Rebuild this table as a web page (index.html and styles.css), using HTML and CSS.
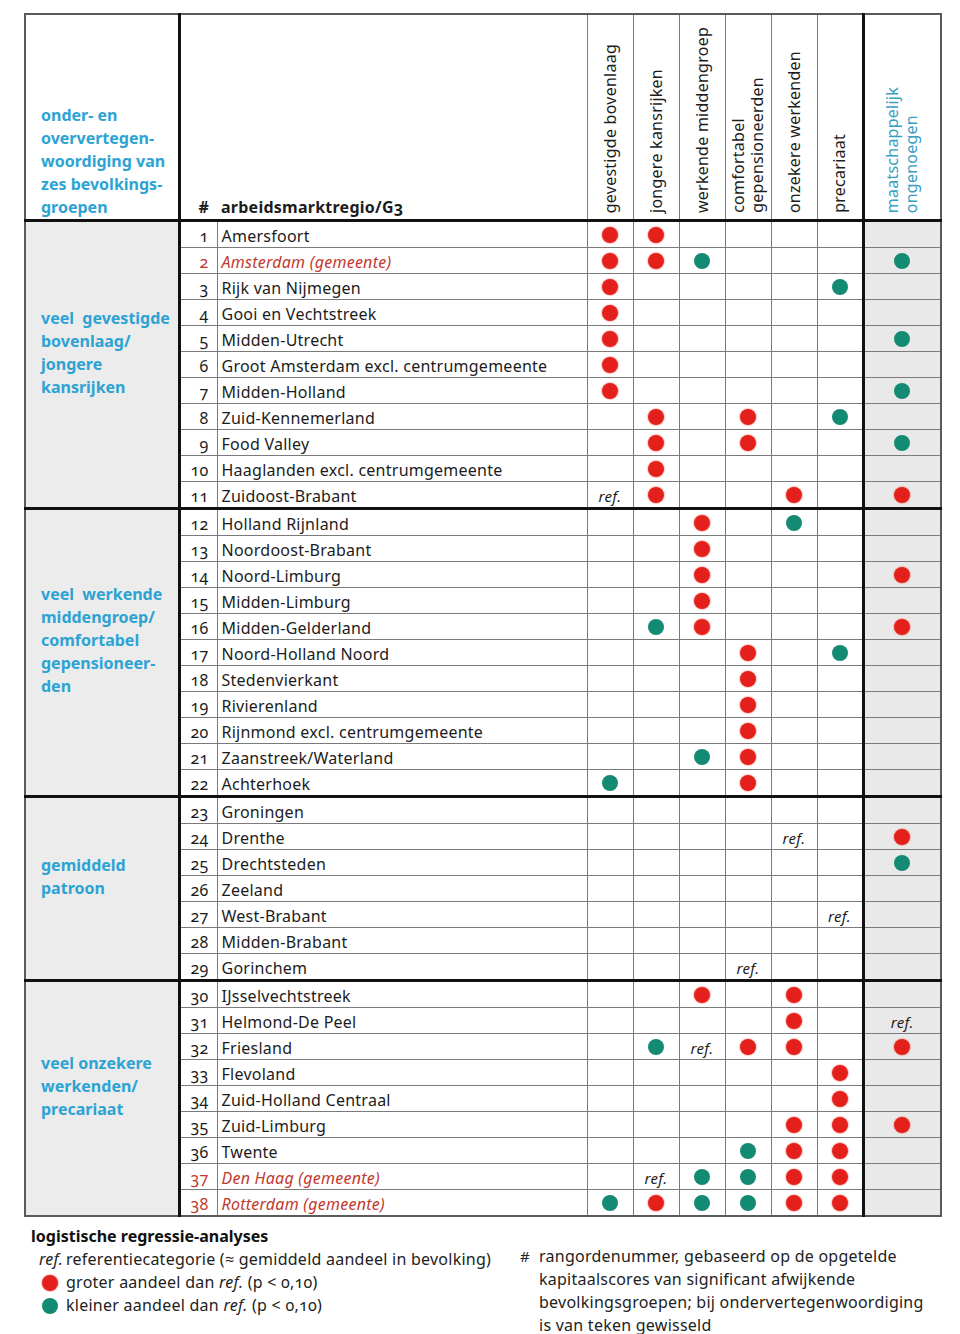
FILE: index.html
```html
<!DOCTYPE html>
<html lang="nl">
<head>
<meta charset="utf-8">
<title>Bevolkingsgroepen per arbeidsmarktregio</title>
<link rel="stylesheet" href="styles.css">
</head>
<body>
<div class="page">
<table class="tbl">
<colgroup>
<col class="c-grp"><col class="c-num"><col class="c-name">
<col class="c-v"><col class="c-v"><col class="c-v"><col class="c-v"><col class="c-v"><col class="c-v">
<col class="c-m">
</colgroup>
<thead>
<tr>
<th class="grp-h">onder- en<br>oververtegen-<br>woordiging van<br>zes bevolkings-<br>groepen</th>
<th class="num-h">#</th>
<th class="name-h">arbeidsmarktregio/G3</th>
<th class="vh"><span>gevestigde bovenlaag</span></th>
<th class="vh"><span>jongere kansrijken</span></th>
<th class="vh"><span>werkende middengroep</span></th>
<th class="vh"><span>comfortabel<br>gepensioneerden</span></th>
<th class="vh"><span>onzekere werkenden</span></th>
<th class="vh"><span>precariaat</span></th>
<th class="vh mh"><span>maatschappelijk<br>ongenoegen</span></th>
</tr>
</thead>
<tbody>
<tr><td class="grp" rowspan="11">veel&nbsp; gevestigde<br>bovenlaag/<br>jongere<br>kansrijken</td><td class="n">1</td><td class="name">Amersfoort</td><td><span class="d r"></span></td><td><span class="d r"></span></td><td></td><td></td><td></td><td></td><td class="m"></td></tr>
<tr class="city"><td class="n">2</td><td class="name">Amsterdam (gemeente)</td><td><span class="d r"></span></td><td><span class="d r"></span></td><td><span class="d t"></span></td><td></td><td></td><td></td><td class="m"><span class="d t"></span></td></tr>
<tr><td class="n">3</td><td class="name">Rijk van Nijmegen</td><td><span class="d r"></span></td><td></td><td></td><td></td><td></td><td><span class="d t"></span></td><td class="m"></td></tr>
<tr><td class="n">4</td><td class="name">Gooi en Vechtstreek</td><td><span class="d r"></span></td><td></td><td></td><td></td><td></td><td></td><td class="m"></td></tr>
<tr><td class="n">5</td><td class="name">Midden-Utrecht</td><td><span class="d r"></span></td><td></td><td></td><td></td><td></td><td></td><td class="m"><span class="d t"></span></td></tr>
<tr><td class="n">6</td><td class="name">Groot Amsterdam excl. centrumgemeente</td><td><span class="d r"></span></td><td></td><td></td><td></td><td></td><td></td><td class="m"></td></tr>
<tr><td class="n">7</td><td class="name">Midden-Holland</td><td><span class="d r"></span></td><td></td><td></td><td></td><td></td><td></td><td class="m"><span class="d t"></span></td></tr>
<tr><td class="n">8</td><td class="name">Zuid-Kennemerland</td><td></td><td><span class="d r"></span></td><td></td><td><span class="d r"></span></td><td></td><td><span class="d t"></span></td><td class="m"></td></tr>
<tr><td class="n">9</td><td class="name">Food Valley</td><td></td><td><span class="d r"></span></td><td></td><td><span class="d r"></span></td><td></td><td></td><td class="m"><span class="d t"></span></td></tr>
<tr><td class="n">10</td><td class="name">Haaglanden excl. centrumgemeente</td><td></td><td><span class="d r"></span></td><td></td><td></td><td></td><td></td><td class="m"></td></tr>
<tr><td class="n">11</td><td class="name">Zuidoost-Brabant</td><td class="ref">ref.</td><td><span class="d r"></span></td><td></td><td></td><td><span class="d r"></span></td><td></td><td class="m"><span class="d r"></span></td></tr>
</tbody>
<tbody>
<tr><td class="grp" rowspan="11">veel&nbsp; werkende<br>middengroep/<br>comfortabel<br>gepensioneer-<br>den</td><td class="n">12</td><td class="name">Holland Rijnland</td><td></td><td></td><td><span class="d r"></span></td><td></td><td><span class="d t"></span></td><td></td><td class="m"></td></tr>
<tr><td class="n">13</td><td class="name">Noordoost-Brabant</td><td></td><td></td><td><span class="d r"></span></td><td></td><td></td><td></td><td class="m"></td></tr>
<tr><td class="n">14</td><td class="name">Noord-Limburg</td><td></td><td></td><td><span class="d r"></span></td><td></td><td></td><td></td><td class="m"><span class="d r"></span></td></tr>
<tr><td class="n">15</td><td class="name">Midden-Limburg</td><td></td><td></td><td><span class="d r"></span></td><td></td><td></td><td></td><td class="m"></td></tr>
<tr><td class="n">16</td><td class="name">Midden-Gelderland</td><td></td><td><span class="d t"></span></td><td><span class="d r"></span></td><td></td><td></td><td></td><td class="m"><span class="d r"></span></td></tr>
<tr><td class="n">17</td><td class="name">Noord-Holland Noord</td><td></td><td></td><td></td><td><span class="d r"></span></td><td></td><td><span class="d t"></span></td><td class="m"></td></tr>
<tr><td class="n">18</td><td class="name">Stedenvierkant</td><td></td><td></td><td></td><td><span class="d r"></span></td><td></td><td></td><td class="m"></td></tr>
<tr><td class="n">19</td><td class="name">Rivierenland</td><td></td><td></td><td></td><td><span class="d r"></span></td><td></td><td></td><td class="m"></td></tr>
<tr><td class="n">20</td><td class="name">Rijnmond excl. centrumgemeente</td><td></td><td></td><td></td><td><span class="d r"></span></td><td></td><td></td><td class="m"></td></tr>
<tr><td class="n">21</td><td class="name">Zaanstreek/Waterland</td><td></td><td></td><td><span class="d t"></span></td><td><span class="d r"></span></td><td></td><td></td><td class="m"></td></tr>
<tr><td class="n">22</td><td class="name">Achterhoek</td><td><span class="d t"></span></td><td></td><td></td><td><span class="d r"></span></td><td></td><td></td><td class="m"></td></tr>
</tbody>
<tbody>
<tr><td class="grp" rowspan="7">gemiddeld<br>patroon</td><td class="n">23</td><td class="name">Groningen</td><td></td><td></td><td></td><td></td><td></td><td></td><td class="m"></td></tr>
<tr><td class="n">24</td><td class="name">Drenthe</td><td></td><td></td><td></td><td></td><td class="ref">ref.</td><td></td><td class="m"><span class="d r"></span></td></tr>
<tr><td class="n">25</td><td class="name">Drechtsteden</td><td></td><td></td><td></td><td></td><td></td><td></td><td class="m"><span class="d t"></span></td></tr>
<tr><td class="n">26</td><td class="name">Zeeland</td><td></td><td></td><td></td><td></td><td></td><td></td><td class="m"></td></tr>
<tr><td class="n">27</td><td class="name">West-Brabant</td><td></td><td></td><td></td><td></td><td></td><td class="ref">ref.</td><td class="m"></td></tr>
<tr><td class="n">28</td><td class="name">Midden-Brabant</td><td></td><td></td><td></td><td></td><td></td><td></td><td class="m"></td></tr>
<tr><td class="n">29</td><td class="name">Gorinchem</td><td></td><td></td><td></td><td class="ref">ref.</td><td></td><td></td><td class="m"></td></tr>
</tbody>
<tbody>
<tr><td class="grp" rowspan="9">veel onzekere<br>werkenden/<br>precariaat</td><td class="n">30</td><td class="name">IJsselvechtstreek</td><td></td><td></td><td><span class="d r"></span></td><td></td><td><span class="d r"></span></td><td></td><td class="m"></td></tr>
<tr><td class="n">31</td><td class="name">Helmond-De Peel</td><td></td><td></td><td></td><td></td><td><span class="d r"></span></td><td></td><td class="m ref">ref.</td></tr>
<tr><td class="n">32</td><td class="name">Friesland</td><td></td><td><span class="d t"></span></td><td class="ref">ref.</td><td><span class="d r"></span></td><td><span class="d r"></span></td><td></td><td class="m"><span class="d r"></span></td></tr>
<tr><td class="n">33</td><td class="name">Flevoland</td><td></td><td></td><td></td><td></td><td></td><td><span class="d r"></span></td><td class="m"></td></tr>
<tr><td class="n">34</td><td class="name">Zuid-Holland Centraal</td><td></td><td></td><td></td><td></td><td></td><td><span class="d r"></span></td><td class="m"></td></tr>
<tr><td class="n">35</td><td class="name">Zuid-Limburg</td><td></td><td></td><td></td><td></td><td><span class="d r"></span></td><td><span class="d r"></span></td><td class="m"><span class="d r"></span></td></tr>
<tr><td class="n">36</td><td class="name">Twente</td><td></td><td></td><td></td><td><span class="d t"></span></td><td><span class="d r"></span></td><td><span class="d r"></span></td><td class="m"></td></tr>
<tr class="city"><td class="n">37</td><td class="name">Den Haag (gemeente)</td><td></td><td class="ref">ref.</td><td><span class="d t"></span></td><td><span class="d t"></span></td><td><span class="d r"></span></td><td><span class="d r"></span></td><td class="m"></td></tr>
<tr class="city"><td class="n">38</td><td class="name">Rotterdam (gemeente)</td><td><span class="d t"></span></td><td><span class="d r"></span></td><td><span class="d t"></span></td><td><span class="d t"></span></td><td><span class="d r"></span></td><td><span class="d r"></span></td><td class="m"></td></tr>
</tbody>
</table>

<div class="legend">
  <div class="leg-left">
    <div class="leg-title">logistische regressie-analyses</div>
    <div class="leg-item"><span class="mk"><i>ref.</i></span><span>referentiecategorie (≈ gemiddeld aandeel in bevolking)</span></div>
    <div class="leg-item"><span class="mk"><span class="d r"></span></span><span>groter aandeel dan <i>ref.</i> (p &lt; 0,10)</span></div>
    <div class="leg-item"><span class="mk"><span class="d t"></span></span><span>kleiner aandeel dan <i>ref.</i> (p &lt; 0,10)</span></div>
  </div>
  <div class="leg-right">
    <span class="hash">#</span>
    <span class="leg-note">rangordenummer, gebaseerd op de opgetelde<br>kapitaalscores van significant afwijkende<br>bevolkingsgroepen; bij ondervertegenwoordiging<br>is van teken gewisseld</span>
  </div>
</div>
</div>
</body>
</html>
```

FILE: styles.css
```css
body {
  margin: 0;
  background: #ffffff;
  font-family: "Noto Sans", "Open Sans", sans-serif;
  font-variant-numeric: oldstyle-nums;
  color: #1c1c1c;
}

.page {
  padding: 13px 0 0 24px;
  width: 916px;
}

.tbl {
  border-collapse: collapse;
  table-layout: fixed;
  width: 916px;
  border: 2px solid #5a5a5a;
  font-size: 16px;
  letter-spacing: 0.25px;
}

.c-grp { width: 154px; }
.c-num { width: 38px; }
.c-name { width: 370px; }
.c-v { width: 46px; }
.c-m { width: 78px; }

.tbl td {
  border: 1px solid #7a7a7a;
  height: 25px;
  padding: 0;
  line-height: 22px;
  text-align: center;
  vertical-align: middle;
}

.tbl th {
  border: 1px solid #7a7a7a;
  border-bottom: 3px solid #111;
  height: 203px;
  padding: 0;
  vertical-align: bottom;
  font-weight: 700;
}

.grp-h {
  text-align: left;
  color: #2da3d4;
  font-size: 16px;
  line-height: 23px;
  letter-spacing: 0;
  padding: 0 0 0 15px !important;
  border-right: 3px solid #111 !important;
}

.num-h {
  text-align: right;
  padding: 0 8px 1px 0 !important;
  border-right: none !important;
  line-height: 22px;
}

.name-h {
  text-align: left;
  padding: 0 0 1px 4px !important;
  border-left: none !important;
  line-height: 22px;
}

.vh {
  text-align: center;
  font-weight: 400 !important;
  padding-bottom: 1px !important;
}

.vh span {
  display: inline-block;
  writing-mode: vertical-rl;
  transform: rotate(180deg);
  text-align: left;
  line-height: 19px;
  font-size: 16px;
}

.mh {
  border-left: 3px solid #111 !important;
  color: #3a9dc2;
}

.tbl tbody + tbody tr:first-child td {
  border-top: 3px solid #111;
}

.tbl td.grp {
  background: #ececec;
  color: #2da3d4;
  font-weight: 700;
  text-align: left;
  line-height: 23px;
  letter-spacing: 0;
  padding: 0 0 24px 15px;
  border-right: 3px solid #111;
}

.tbl td.n {
  text-align: right;
  vertical-align: bottom;
  padding-right: 8px;
  border-right: 1px solid #7a7a7a;
}

.tbl td.name {
  text-align: left;
  vertical-align: bottom;
  padding-left: 4px;
  white-space: nowrap;
}

.city td.n,
.city td.name {
  color: #c23a2f;
}

.city td.name {
  font-style: italic;
}

.tbl td.m {
  background: #e9e9e9;
  border-left: 3px solid #111;
}

.tbl td.ref {
  font-style: italic;
  font-size: 15px;
  vertical-align: bottom;
}

.d {
  display: inline-block;
  width: 16px;
  height: 16px;
  border-radius: 50%;
  vertical-align: middle;
}

.tbl td .d {
  display: block;
  margin: 0 auto;
}

.d.r {
  background: #e3201b;
  box-shadow: 0 0 1px 1px rgba(255, 120, 110, 0.45);
}

.d.t {
  background: #138a72;
}

.legend {
  display: flex;
  padding-top: 8px;
  font-size: 16px;
  line-height: 23px;
  letter-spacing: 0.25px;
  color: #222;
}

.leg-left {
  width: 489px;
  padding-left: 7px;
}

.leg-title {
  font-weight: 700;
  color: #111;
  letter-spacing: 0;
}

.leg-item {
  display: flex;
  padding-left: 8px;
}

.leg-item .mk {
  width: 27px;
  display: flex;
  align-items: center;
}

.leg-item .mk .d {
  margin-left: 3px;
}

.leg-right {
  display: flex;
  padding-top: 20px;
}

.hash {
  width: 19px;
  font-size: 15px;
}
```
